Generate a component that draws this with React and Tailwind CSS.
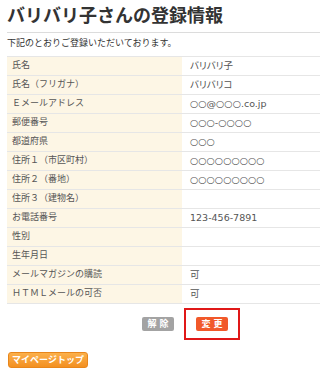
import React from 'react';

const rows = [
  ['氏名', 'バリバリ子'],
  ['氏名（フリガナ）', 'バリバリコ'],
  ['Ｅメールアドレス', '○○@○○○.co.jp'],
  ['郵便番号', '○○○-○○○○'],
  ['都道府県', '○○○'],
  ['住所１（市区町村）', '○○○○○○○○○'],
  ['住所２（番地）', '○○○○○○○○○'],
  ['住所３（建物名）', ''],
  ['お電話番号', '123-456-7891'],
  ['性別', ''],
  ['生年月日', ''],
  ['メールマガジンの購読', '可'],
  ['ＨＴＭＬメールの可否', '可'],
];

function App() {
  return (
    <div className="w-[320px] h-[378px] bg-white overflow-hidden font-['DejaVu_Sans','Noto_Sans_CJK_JP',sans-serif] text-[#444]">
      <div className="pl-[7px]">
        <h1 className="pt-[3px] text-[18px] leading-[26px] font-bold text-[#333]">バリバリ子さんの登録情報</h1>
        <div className="mt-[3px] border-t border-[#dcdcdc]" />
        <p className="mt-[4px] text-[9px] leading-[12px] text-[#333]">下記のとおりご登録いただいております。</p>

        {/* profile table */}
        <div className="mt-[7px] border-t border-[#e6e6e6]">
          {rows.map(([label, value]) => (
            <div key={label} className="flex h-[19px] border-b border-[#e6e6e6]">
              <div className="w-[175px] bg-[#fdf6e5] pl-[5px] flex items-center text-[9px] text-[#555]">
                {label}
              </div>
              <div className="flex-1 pl-[8px] flex items-center text-[9.5px] text-[#555] [font-feature-settings:'palt']">
                {value}
              </div>
            </div>
          ))}
        </div>

        <div className="flex items-center mt-[4px] pl-[135px]">
          <button className="w-[32px] h-[14px] rounded-[2px] bg-[#a3a3a3] text-white text-[9px] font-bold leading-none tracking-[3px] pl-[3px]">解除</button>
          <div className="ml-[10px] w-[56px] h-[32px] border-2 border-[#e01818] flex items-center justify-center">
            <button className="w-[32px] h-[14px] rounded-[2px] bg-[#f1592a] text-white text-[9px] font-bold leading-none tracking-[3px] pl-[3px]">変更</button>
          </div>
        </div>

        <button className="mt-[12px] ml-[1px] w-[80px] h-[16px] rounded-[3px] border border-[#e8861b] bg-gradient-to-b from-[#fbb04a] to-[#f3901f] text-white text-[9px] font-bold leading-none whitespace-nowrap">
          マイページトップ
        </button>
      </div>
    </div>
  );
}

export default App;
